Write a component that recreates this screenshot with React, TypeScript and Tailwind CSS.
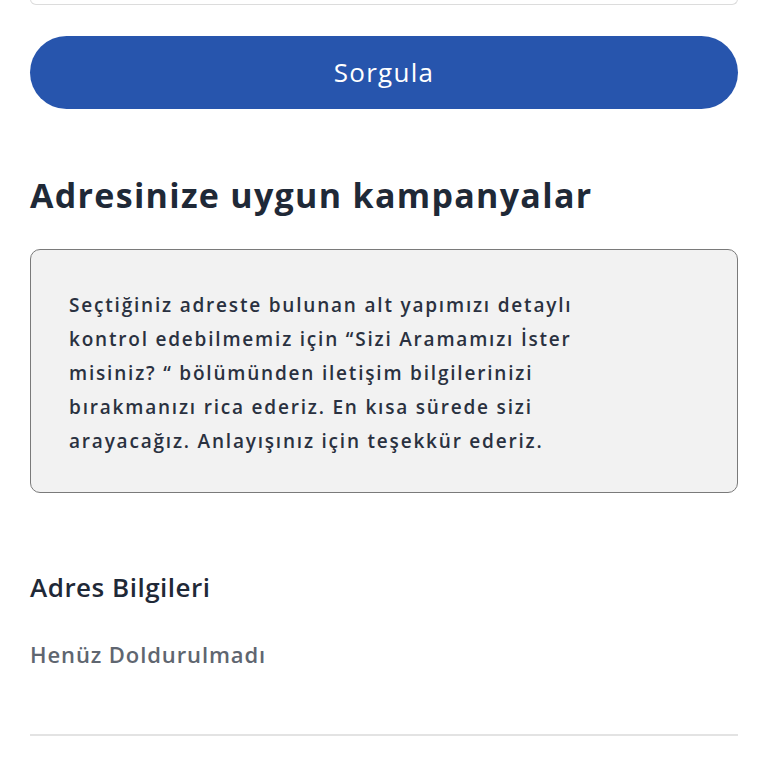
const App = () => {
  return (
    <div className="w-[768px] h-[768px] overflow-hidden bg-white px-[30px] font-['Open_Sans',sans-serif]">
      {/* input edge cut off at top */}
      <div className="h-[6px] -mt-px border-x border-b border-[#dcdcdc] rounded-b-xl" />

      <button className="mt-[31px] w-full h-[73px] rounded-full bg-[#2755ad] text-white text-[26px] font-normal tracking-[1.3px]">
        Sorgula
      </button>

      <h2 className="mt-[64px] text-[34px] leading-[44px] font-bold text-[#1f2937] tracking-[1.3px]">
        Adresinize uygun kampanyalar
      </h2>

      <div className="mt-[32px] h-[244px] rounded-[10px] border border-[#7a7a7a] bg-[#f2f2f2] pl-[38px] pt-[38px]">
        <p className="max-w-[530px] text-[19px] leading-[34px] font-semibold text-[#2a3140] tracking-[1.8px]">
          Seçtiğiniz adreste bulunan alt yapımızı detaylı kontrol edebilmemiz için “Sizi Aramamızı İster misiniz? “
          bölümünden iletişim bilgilerinizi bırakmanızı rica ederiz. En kısa sürede sizi arayacağız. Anlayışınız
          için teşekkür ederiz.
        </p>
      </div>

      <h3 className="mt-[76px] text-[26px] leading-[36px] font-semibold text-[#1f2937] tracking-[0.5px]">
        Adres Bilgileri
      </h3>
      <p className="mt-[33px] text-[22px] leading-[32px] font-semibold text-[#5f6670] tracking-[0.9px]">
        Henüz Doldurulmadı
      </p>

      <div className="mt-[64px] h-[2px] bg-[#e3e3e3]" />
    </div>
  );
};

export default App;
